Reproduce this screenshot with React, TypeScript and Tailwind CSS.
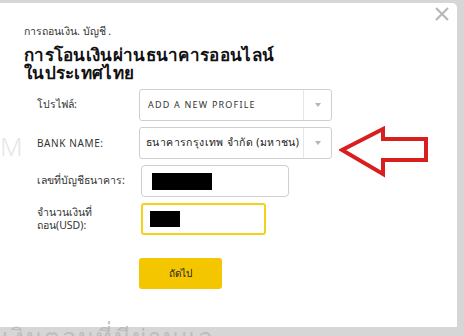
import React from "react";

const font = { fontFamily: '"Noto Sans", "DejaVu Sans", sans-serif' };

function Select({ text, upper }: { text: string; upper?: boolean }) {
  return (
    <div className="flex h-[32px] w-[193px] items-stretch rounded-[3px] border border-[#cfcfcf] bg-white">
      <div
        className={
          upper
            ? "flex flex-1 items-center pl-[8px] text-[9px] tracking-[1.2px] text-[#333]"
            : "flex flex-1 items-center pl-[6px] text-[10.5px] tracking-[0.4px] text-[#222]"
        }
      >
        {text}
      </div>
      <div className="flex w-[28px] items-center justify-center border-l border-[#e6e6e6]">
        <div className="h-0 w-0 border-x-[3.5px] border-t-[4px] border-x-transparent border-t-[#b5b5b5]" />
      </div>
    </div>
  );
}

export default function App() {
  return (
    <div className="relative h-[336px] w-[464px] overflow-hidden bg-[#d6d6d6]" style={font}>
      <div className="mt-[3px] flex h-[324px] w-[457px] flex-col rounded-tr-[5px] bg-white pl-[24px]">
        <div className="relative">
          <div className="absolute right-[7px] top-[3px] h-[16px] w-[16px]">
            <svg viewBox="0 0 16 16" className="h-[16px] w-[16px]">
              <path d="M2 2 L14 14 M14 2 L2 14" stroke="#b8b8b8" strokeWidth="2.2" fill="none" />
            </svg>
          </div>
        </div>
        <div className="mt-[21px] text-[10.5px] leading-[14px] text-[#333]">การถอนเงิน. บัญชี .</div>
        <div className="mt-[8px] text-[17px] font-bold leading-[18px] tracking-[0.3px] text-[#111]">
          <div className="h-[18px]">การโอนเงินผ่านธนาคารออนไลน์</div>
          <div className="h-[18px]">ในประเทศไทย</div>
        </div>
        <div className="relative mt-[7px] flex flex-col gap-[6px] pl-[13px]">
          <div className="absolute left-[-24px] top-[44px] text-[26px] font-light leading-[26px] text-[#e6e6e6]">M</div>
          <div className="flex h-[32px] items-center">
            <div className="w-[102px] text-[10.5px] text-[#333]">โปรไฟล์:</div>
            <Select text="ADD A NEW PROFILE" upper />
          </div>
          <div className="relative flex h-[32px] items-center">
            <div className="w-[102px] text-[10px] tracking-[0.6px] text-[#333]">BANK NAME:</div>
            <Select text="ธนาคารกรุงเทพ จำกัด (มหาชน)" />
            <svg width="92" height="52" viewBox="0 0 92 52" className="absolute left-[302px] top-[-1px]">
              <polygon
                points="3,24 44,3 44,13 87,13 87,34 44,34 44,48"
                fill="none"
                stroke="#d81f1f"
                strokeWidth="4"
                strokeLinejoin="miter"
              />
            </svg>
          </div>
          <div className="flex h-[32px] items-center">
            <div className="w-[104px] text-[10.5px] text-[#333]">เลขที่บัญชีธนาคาร:</div>
            <div className="flex h-[32px] w-[148px] items-center rounded-[4px] border border-[#cfcfcf] pl-[10px]">
              <div className="h-[17px] w-[60px] bg-black" />
            </div>
          </div>
          <div className="flex h-[32px] items-center">
            <div className="w-[104px] text-[10.5px] leading-[13px] text-[#333]">
              <div>จำนวนเงินที่</div>
              <div>ถอน(USD):</div>
            </div>
            <div className="flex h-[32px] w-[125px] items-center rounded-[3px] border-2 border-[#f3d21a] pl-[7px]">
              <div className="h-[16px] w-[30px] bg-black" />
            </div>
          </div>
          <div className="mt-[17px] flex">
            <div className="ml-[102px] flex h-[31px] w-[83px] items-center justify-center rounded-[3px] bg-[#f3c600] text-[10px] text-[#222]">
              ถัดไป
            </div>
          </div>
        </div>
      </div>
      <div className="mt-[-2px] pl-[2px] text-[24px] leading-[24px] tracking-[2px] text-[#bdbdbd] whitespace-nowrap">
        เงินตอนที่มีผ่านแล
      </div>
    </div>
  );
}
